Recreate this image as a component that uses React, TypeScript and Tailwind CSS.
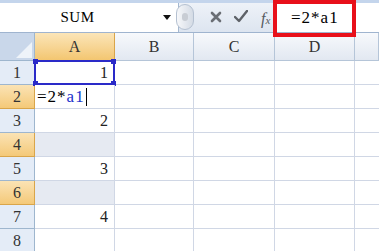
import React from "react";

const SF = "font-['Liberation_Serif','DejaVu_Serif',serif]";

function Toolbar() {
  return (
    <div className="relative h-[33px] w-full bg-[#dbe5f2] border-t-[3px] border-[#c4d5ec] border-b border-b-[#9fb4cf] flex">
      <div className="w-[179px] h-full bg-white border-r border-[#a5b8d0] flex items-center relative">
        <div className={`w-[155px] text-center text-[15px] text-black tracking-[0.5px] ${SF}`}>SUM</div>
        <svg className="absolute left-[163px] top-[12px]" width="8" height="5" viewBox="0 0 8 5">
          <path d="M0 0 L8 0 L4 5 Z" fill="#111" />
        </svg>
      </div>
      <div className="w-[94px] h-full bg-gradient-to-b from-[#eef2f8] to-[#dde5f0] flex items-center relative">
        <div className="absolute -left-[3px] top-[1px] w-[18px] h-[26px] rounded-full bg-gradient-to-r from-[#f7f8fa] to-[#d4dbe5] border border-[#b5c1d1] flex items-center justify-center">
          <div className="w-[6px] h-[8px] rounded-full bg-[#c8cdd4]" />
        </div>
        <svg className="absolute left-[31px] top-[8px]" width="12" height="12" viewBox="0 0 12 12">
          <path d="M2 2 L10 10 M10 2 L2 10" stroke="#6b6f75" strokeWidth="2.6" strokeLinecap="round" />
        </svg>
        <svg className="absolute left-[55px] top-[7px]" width="14" height="13" viewBox="0 0 14 13">
          <path d="M1 7 L5 11 L13 1" stroke="#5e6268" strokeWidth="2.4" fill="none" strokeLinejoin="round" strokeLinecap="round" />
        </svg>
        <span className={`absolute left-[82px] top-[4px] text-[16px] italic text-[#55595f] ${SF}`}>
          f<span className="text-[11px]">x</span>
        </span>
      </div>
      <div className="flex-1 h-full bg-white flex items-center pl-[17px] border-l border-[#a5b8d0]">
        <span className={`text-[17px] text-black tracking-[1px] ${SF}`}>=2*a1</span>
      </div>
      <div className="absolute left-[273px] -top-[3px] w-[83px] h-[37px] border-[4px] border-[#e8101a] pointer-events-none" />
    </div>
  );
}

const cols = ["A", "B", "C", "D", ""];
const colW = ["w-[80px]", "w-[79px]", "w-[81px]", "w-[80px]", "flex-1"];

function HeaderRow() {
  return (
    <div className="flex h-[28px]">
      <div className="w-[35px] h-full bg-[#c9d7ea] border-r border-b border-[#9eb6ce] relative overflow-hidden">
        <svg className="absolute right-[2px] bottom-[2px]" width="16" height="16" viewBox="0 0 16 16">
          <path d="M16 0 L16 16 L0 16 Z" fill="#eef3f9" />
        </svg>
      </div>
      {cols.map((c, i) => (
        <div
          key={i}
          className={`${colW[i]} h-full border-r border-b flex items-center justify-center text-[16px] text-[#333] ${SF} ${
            i === 0
              ? "bg-gradient-to-b from-[#fbe5b8] to-[#f3c670] border-[#d9a54a]"
              : "bg-gradient-to-b from-[#f7f9fc] to-[#e2e8f1] border-[#b5c5d8]"
          }`}
        >
          {c}
        </div>
      ))}
    </div>
  );
}

type Row = { n: number; a?: React.ReactNode; orange?: boolean; shaded?: boolean; sel?: boolean };

const rows: Row[] = [
  { n: 1, a: "1", sel: true },
  { n: 2, orange: true },
  { n: 3, a: "2" },
  { n: 4, orange: true, shaded: true },
  { n: 5, a: "3" },
  { n: 6, orange: true, shaded: true },
  { n: 7, a: "4" },
  { n: 8 },
];

function DataRow({ r }: { r: Row }) {
  return (
    <div className="flex h-[24px]">
      <div
        className={`w-[35px] h-full border-r border-b flex items-center justify-center text-[16px] text-[#333] ${SF} ${
          r.orange
            ? "bg-gradient-to-b from-[#fbe3b4] to-[#f4c978] border-[#d9a54a]"
            : "bg-[#e4ecf7] border-[#9eb6ce]"
        }`}
      >
        {r.n}
      </div>
      <div
        className={`w-[80px] h-full border-r border-b border-[#d0d7e5] relative flex items-center justify-end pr-[6px] text-[16px] text-[#222] ${SF} ${
          r.shaded ? "bg-[#e6eaf2]" : "bg-white"
        }`}
      >
        {r.a}
        {r.n === 2 && (
          <span className={`absolute left-[2px] top-[3px] text-[17px] leading-[18px] text-black flex items-center tracking-[1px] ${SF}`}>
            =2*<span className="text-[#2233cc]">a1</span>
            <span className="inline-block w-[1px] h-[18px] bg-black ml-[1px]" />
          </span>
        )}
        {r.sel && (
          <div className="absolute -left-[1px] -top-[1px] w-[81px] h-[25px] border-2 border-[#2a2ac8] pointer-events-none">
            <div className="absolute -left-[3px] -top-[3px] w-[5px] h-[5px] bg-[#2a2ac8]" />
            <div className="absolute -right-[3px] -top-[3px] w-[5px] h-[5px] bg-[#2a2ac8]" />
            <div className="absolute -left-[3px] -bottom-[3px] w-[5px] h-[5px] bg-[#2a2ac8]" />
            <div className="absolute -right-[3px] -bottom-[3px] w-[5px] h-[5px] bg-[#2a2ac8]" />
          </div>
        )}
      </div>
      <div className="w-[79px] h-full border-r border-b border-[#d0d7e5] bg-white" />
      <div className="w-[81px] h-full border-r border-b border-[#d0d7e5] bg-white" />
      <div className="w-[80px] h-full border-r border-b border-[#d0d7e5] bg-white" />
      <div className="flex-1 h-full border-b border-[#d0d7e5] bg-white" />
    </div>
  );
}

export default function App() {
  return (
    <div className="w-[379px] h-[251px] overflow-hidden bg-white">
      <Toolbar />
      <HeaderRow />
      {rows.map((r) => (
        <DataRow key={r.n} r={r} />
      ))}
    </div>
  );
}
